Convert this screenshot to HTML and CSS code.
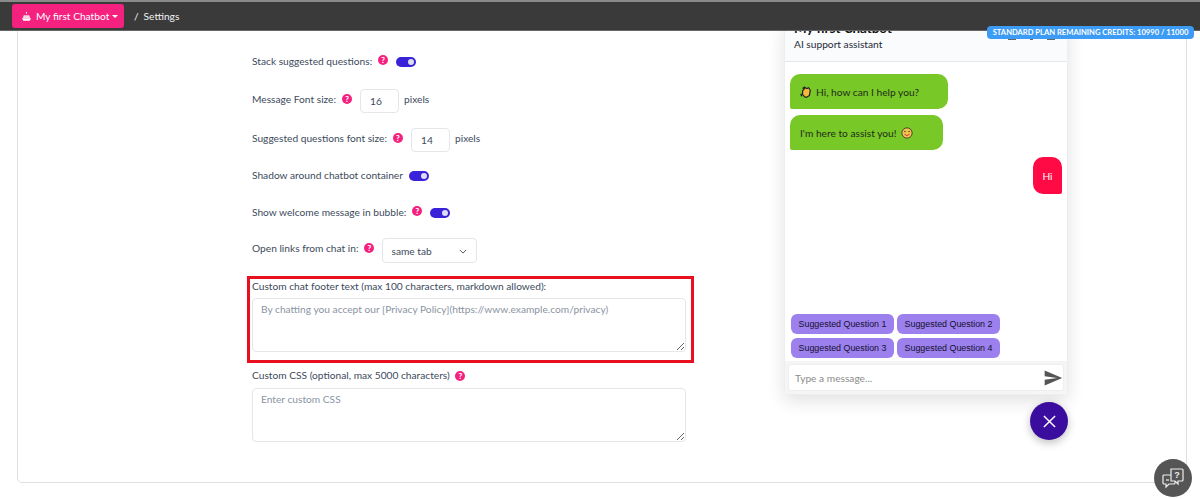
FILE: index.html
```html
<!DOCTYPE html>
<html lang="en">
<head>
    <meta charset="UTF-8" />
    <title>Settings</title>
    <link rel="stylesheet" href="styles.css">
</head>
<body>
    <header class="topbar">
        <button type="button" class="bot-btn">
            <svg class="bot-icon" viewBox="0 0 12 12" width="11" height="11"><path d="M6 1v2" stroke="#fff" fill="none"/><path d="M3 4.500h6l1 3H2z" fill="#f4d7e4"/><path d="M1 8h10L9.500 10.500h-7z" fill="#fff"/></svg>
            My first Chatbot
            <span class="caret"></span>
        </button>
        <span class="crumb">/</span>
        <span class="crumb-text">Settings</span>
    </header>
    <span class="credits">STANDARD PLAN REMAINING CREDITS: 10990 / 11000</span>

    <main class="page">
        <div class="card">
            <form class="settings">
                <div class="row row-stack">
                    <label>Stack suggested questions:</label>
                    <span class="help">?</span>
                    <span class="toggle"></span>
                </div>
                <div class="row row-font">
                    <label>Message Font size:</label>
                    <span class="help">?</span>
                    <input class="num" type="text" value="16" readonly />
                    <span>pixels</span>
                </div>
                <div class="row row-font">
                    <label>Suggested questions font size:</label>
                    <span class="help">?</span>
                    <input class="num" type="text" value="14" readonly />
                    <span>pixels</span>
                </div>
                <div class="row row-shadow">
                    <label>Shadow around chatbot container</label>
                    <span class="toggle"></span>
                </div>
                <div class="row row-welcome">
                    <label>Show welcome message in bubble:</label>
                    <span class="help">?</span>
                    <span class="toggle"></span>
                </div>
                <div class="row row-links">
                    <label>Open links from chat in:</label>
                    <span class="help">?</span>
                    <span class="select">same tab
                        <svg viewBox="0 0 10 6" width="8" height="5"><path d="M1 1l4 4 4-4" fill="none" stroke="#555" stroke-width="1.200"/></svg>
                    </span>
                </div>
                <div class="field field-marked">
                    <label>Custom chat footer text (max 100 characters, markdown allowed):</label>
                    <textarea placeholder="By chatting you accept our [Privacy Policy](https://www.example.com/privacy)"></textarea>
                </div>
                <div class="field">
                    <label>Custom CSS (optional, max 5000 characters) <span class="help help-inline">?</span></label>
                    <textarea placeholder="Enter custom CSS"></textarea>
                </div>
            </form>

            <aside class="preview">
                <div class="chat">
                    <div class="chat-head">
                        <div class="chat-title">
                            <strong>My first Chatbot</strong>
                            <span>AI support assistant</span>
                        </div>
                        <div class="chat-tools"><i></i><i class="tool-thin"></i><i></i></div>
                    </div>
                    <div class="messages">
                        <div class="bubble bot bot-one">
                            <svg viewBox="0 0 14 14" width="12" height="12"><path d="M3 6l3-4 2 1 2-1 2 3-1 6-3 2H6L3 10z" fill="#f5b83d" stroke="#222" stroke-width="1.400"/><path d="M3 3l3-2M1 9l1 3" stroke="#222" stroke-width="1.600"/></svg>
                            Hi, how can I help you?
                        </div>
                        <div class="bubble bot bot-two">
                            I'm here to assist you!
                            <svg viewBox="0 0 14 14" width="12" height="12"><circle cx="7" cy="7" r="6" fill="#f7c14e" stroke="#333"/><path d="M3.500 5.500q1-1 2 0M8.500 5.500q1-1 2 0" fill="none" stroke="#333"/><path d="M4 8.500q3 3 6 0" fill="none" stroke="#a33"/></svg>
                        </div>
                        <div class="bubble user">Hi</div>
                    </div>
                    <div class="suggestions">
                        <span>Suggested Question 1</span>
                        <span>Suggested Question 2</span>
                        <span>Suggested Question 3</span>
                        <span>Suggested Question 4</span>
                    </div>
                    <div class="chat-input">
                        <div class="chat-box">
                            <span>Type a message...</span>
                            <svg viewBox="0 0 24 24" width="20" height="20"><path d="M2 21l21-9L2 3v7l15 2-15 2z" fill="#555"/></svg>
                        </div>
                    </div>
                </div>
                <button type="button" class="chat-close">
                    <svg viewBox="0 0 14 14" width="13" height="13"><path d="M1 1l12 12M13 1L1 13" stroke="#fff" stroke-width="1.600"/></svg>
                </button>
            </aside>
        </div>
    </main>

    <button type="button" class="support">
        <svg viewBox="0 0 24 24" width="24" height="24" fill="none" stroke="#eee" stroke-width="1.200"><path d="M10 3h11a1 1 0 0 1 1 1v10a1 1 0 0 1-1 1h-4v3l-3-3h-4z" /><path d="M10 9H3a1 1 0 0 0-1 1v7a1 1 0 0 0 1 1h2v3l3-3h5a1 1 0 0 0 1-1v-2"/><path d="M5 14h3" /><text x="16" y="12" font-size="9" font-weight="700" fill="#eee" stroke="none" text-anchor="middle" font-family="Liberation Sans">?</text></svg>
    </button>
</body>
</html>
```

FILE: styles.css
```css
* {
    box-sizing: border-box;
}

html, body {
    height: 100%;
}

body {
    margin: 0;
    overflow: hidden;
    background: #fff;
    color: #3d4a5c;
    font-family: Lato, "Noto Sans", sans-serif;
    font-size: 10.2px;
    display: flex;
    flex-direction: column;
}

.topbar {
    height: 31px;
    flex: none;
    display: flex;
    align-items: center;
    padding: 0 12px;
    background: #3a3a3a;
    border-top: 2px solid #8a8a8a;
    border-bottom: 1px solid #666;
    color: #f2f2f2;
    position: relative;
    z-index: 5;
}

.bot-btn {
    display: flex;
    align-items: center;
    width: 112px;
    height: 24px;
    padding: 0 0 0 9px;
    border: none;
    border-radius: 3px;
    background: #f5217f;
    color: #fff;
    font: inherit;
    white-space: nowrap;
}

.bot-icon {
    margin-right: 4px;
}

.caret {
    margin-left: 3px;
    border-top: 3px solid #fff;
    border-left: 3px solid transparent;
    border-right: 3px solid transparent;
}

.crumb {
    margin-left: 10px;
}

.crumb-text {
    margin-left: 5px;
}

.credits {
    position: absolute;
    top: 26px;
    left: 987px;
    z-index: 6;
    width: 207px;
    height: 13px;
    border-radius: 4px;
    background: #3c9bf4;
    color: #fff;
    font-size: 7.6px;
    font-weight: 700;
    line-height: 13px;
    text-align: center;
    white-space: nowrap;
}

.page {
    flex: 1;
    overflow: hidden;
    padding: 0 13px 15px 17px;
}

.card {
    display: flex;
    height: 100%;
    margin-top: -1px;
    padding-left: 234px;
    border: 1px solid #dfdfdf;
    border-top: none;
    border-radius: 0 0 5px 5px;
}

.settings {
    width: 434px;
    flex: none;
    padding-top: 13px;
}

.row {
    display: flex;
    align-items: flex-start;
    line-height: 18px;
}

.row-stack {
    height: 45px;
    padding-top: 9px;
}

.row-font {
    height: 39px;
}

.row-font label,
.row-font > span:last-child {
    padding-top: 2px;
}

.row-font .help {
    margin-top: 6px;
}

.row-shadow {
    height: 34px;
}

.row-welcome {
    height: 38px;
    padding-top: 3px;
}

.row-links {
    height: 41px;
}

.row-links label {
    padding-top: 1px;
}

.row-links .help {
    margin-top: 5px;
}

.help {
    flex: none;
    width: 10px;
    height: 10px;
    margin: 3px 0 0 6px;
    border-radius: 50%;
    background: #f5217f;
    color: #fff;
    font-size: 8px;
    font-weight: 900;
    line-height: 10px;
    text-align: center;
}

.help-inline {
    display: inline-block;
    margin: 0 0 0 3px;
    vertical-align: 0;
}

.toggle {
    flex: none;
    position: relative;
    width: 20px;
    height: 10px;
    margin: 5px 0 0 8px;
    border-radius: 6px;
    background: #3a22d8;
}

.toggle::after {
    content: "";
    position: absolute;
    top: 2px;
    right: 2px;
    width: 6px;
    height: 6px;
    border-radius: 50%;
    background: #dcdcf5;
}

.row-shadow .toggle {
    margin-left: 6px;
}

.num {
    width: 39px;
    height: 24px;
    margin: 1px 5px 0 8px;
    padding: 0 0 0 9px;
    border: 1px solid #e4e6ea;
    border-radius: 4px;
    color: #3d4a5c;
    font: inherit;
    outline: none;
}

.select {
    display: flex;
    align-items: center;
    justify-content: space-between;
    width: 95px;
    height: 25px;
    margin-left: 8px;
    padding: 1px 9px 0 8px;
    border: 1px solid #e4e6ea;
    border-radius: 4px;
}

.field {
    display: flex;
    flex-direction: column;
}

.field label {
    height: 22px;
    line-height: 18px;
    white-space: nowrap;
}

.field textarea {
    width: 100%;
    height: 54px;
    padding: 4px 8px;
    border: 1px solid #e4e6ea;
    border-radius: 4px;
    color: #3d4a5c;
    font: inherit;
    outline: none;
}

.field textarea::placeholder {
    color: #8b94a3;
}

.field-marked {
    margin: -3px -8px 3px -5px;
    padding: 0 5px 8px 2px;
    border: 3px solid #e8101f;
}

.field-marked label {
    height: 19px;
    line-height: 14px;
}

.preview {
    width: 284px;
    flex: none;
    margin-left: 98px;
    margin-top: -9px;
    display: flex;
    flex-direction: column;
    align-items: flex-end;
}

.chat {
    width: 100%;
    height: 374px;
    flex: none;
    display: flex;
    flex-direction: column;
    background: #fff;
    border: 1px solid #eceef0;
    border-radius: 4px;
    box-shadow: 0 6px 18px rgba(0, 0, 0, .12);
    color: #1f2937;
}

.chat-head {
    height: 40px;
    flex: none;
    display: flex;
    justify-content: space-between;
    padding: 0 9px;
    background: #f9fbfd;
    border-bottom: 1px solid #e5e7eb;
}

.chat-title {
    display: flex;
    flex-direction: column;
    margin-top: -3px;
}

.chat-title strong {
    height: 15px;
    color: #111;
    font-size: 13.4px;
    line-height: 18px;
}

.chat-title span {
    line-height: 19px;
    margin-top: 1px;
}

.chat-tools {
    display: flex;
    gap: 14px;
    padding: 15px 3px 0 0;
}

.chat-tools i {
    width: 8px;
    height: 3px;
    background: #666;
}

.chat-tools .tool-thin {
    width: 3px;
}

.messages {
    flex: 1;
    display: flex;
    flex-direction: column;
    align-items: flex-start;
    padding: 12px 5px 0 5px;
}

.bubble {
    display: flex;
    align-items: center;
    border-radius: 10px;
    white-space: nowrap;
}

.bubble.bot {
    padding-left: 10px;
    background: #78c827;
    border-bottom-left-radius: 2px;
    color: #1f2d1a;
}

.bubble svg {
    margin: 0 4px 0 0;
}

.bot-two svg {
    margin: 0 0 0 4px;
}

.bot-one {
    width: 158px;
    height: 35px;
    margin-bottom: 6px;
}

.bot-two {
    width: 153px;
    height: 35px;
    margin-bottom: 7px;
}

.bubble.user {
    align-self: flex-end;
    justify-content: center;
    width: 29px;
    height: 37px;
    background: #ff0a45;
    border-bottom-right-radius: 2px;
    color: #fff;
}

.suggestions {
    display: grid;
    grid-template-columns: 103px 103px;
    column-gap: 3px;
    row-gap: 4px;
    padding: 0 0 3px 6px;
}

.suggestions span {
    height: 20px;
    border-radius: 6px;
    background: #9b80ee;
    color: #15102e;
    font-family: "Liberation Sans", sans-serif;
    font-size: 8.9px;
    line-height: 20px;
    text-align: center;
    white-space: nowrap;
}

.chat-input {
    height: 33px;
    flex: none;
    padding: 3px;
    background: #f5f5f5;
}

.chat-box {
    display: flex;
    align-items: center;
    justify-content: space-between;
    height: 27px;
    padding: 0 0 0 6px;
    background: #fff;
    border: 1px solid #eee;
    border-radius: 3px;
    color: #8c8c8c;
}

.chat-close {
    width: 38px;
    height: 38px;
    margin: 7px 0 0;
    padding: 0;
    display: flex;
    align-items: center;
    justify-content: center;
    border: none;
    border-radius: 50%;
    background: #3b0d9e;
    box-shadow: 0 3px 8px rgba(0, 0, 0, .25);
}

.support {
    position: absolute;
    left: 1154px;
    top: 459px;
    width: 38px;
    height: 38px;
    padding: 0;
    display: flex;
    align-items: center;
    justify-content: center;
    border: none;
    border-radius: 50%;
    background: #555;
}
```
